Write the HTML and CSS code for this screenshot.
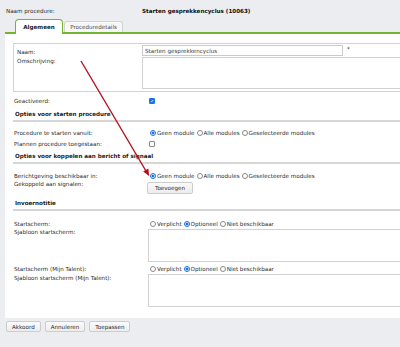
FILE: index.html
```html
<!DOCTYPE html>
<html lang="nl">
<head>
    <meta charset="UTF-8">
    <meta name="viewport" content="width=device-width, initial-scale=1.0">
    <title>Procedure - Starten gesprekkencyclus</title>
    <link rel="stylesheet" href="styles.css">
</head>
<body>
    <div class="page">
        <div class="proc-head">
            <span>Naam procedure:</span>
            <span class="proc-name">Starten gesprekkencyclus (10063)</span>
        </div>

        <div class="tabs">
            <div class="tab active">Algemeen</div>
            <div class="tab">Proceduredetails</div>
        </div>

        <div class="panel">
            <!-- naam + omschrijving -->
            <div class="group">
                <div class="g-row">
                    <label class="g-label">Naam:</label>
                    <div class="ctrl">
                        <input class="text-input" type="text" value="Starten gesprekkencyclus">
                        <span class="req">*</span>
                    </div>
                </div>
                <div class="g-row second">
                    <label class="g-label top">Omschrijving:</label>
                    <textarea class="area short"></textarea>
                </div>
            </div>

            <div class="row gap-5">
                <span>Geactiveerd:</span>
                <span class="check on"><svg viewBox="0 0 6 6"><path d="M1.3 3.1 L2.5 4.3 L4.7 1.7" /></svg></span>
            </div>

            <div class="section gap-5">Opties voor starten procedure</div>
            <div class="row gap-7">
                <span>Procedure te starten vanuit:</span>
                <div class="opts">
                    <span class="radio on"></span><span>Geen module</span>
                    <span class="radio"></span><span>Alle modules</span>
                    <span class="radio"></span><span>Geselecteerde modules</span>
                </div>
            </div>
            <div class="row gap-3">
                <span>Plannen procedure toegestaan:</span>
                <span class="check"></span>
            </div>

            <div class="section gap-4">Opties voor koppelen aan bericht of signaal</div>
            <div class="row gap-8">
                <span>Berichtgeving beschikbaar in:</span>
                <div class="opts">
                    <span class="radio on"></span><span>Geen module</span>
                    <span class="radio"></span><span>Alle modules</span>
                    <span class="radio"></span><span>Geselecteerde modules</span>
                </div>
            </div>
            <div class="row">
                <span>Gekoppeld aan signalen:</span>
                <div><button class="btn add">Toevoegen</button></div>
            </div>

            <div class="section gap-5">Invoernotitie</div>
            <div class="row gap-9">
                <span>Startscherm:</span>
                <div class="opts">
                    <span class="radio"></span><span>Verplicht</span>
                    <span class="radio on"></span><span>Optioneel</span>
                    <span class="radio"></span><span>Niet beschikbaar</span>
                </div>
            </div>
            <div class="row">
                <span>Sjabloon startscherm:</span>
                <textarea class="area tall"></textarea>
            </div>
            <div class="row gap-3">
                <span>Startscherm (Mijn Talent):</span>
                <div class="opts">
                    <span class="radio"></span><span>Verplicht</span>
                    <span class="radio on"></span><span>Optioneel</span>
                    <span class="radio"></span><span>Niet beschikbaar</span>
                </div>
            </div>
            <div class="row">
                <span class="lbl-low">Sjabloon startscherm (Mijn Talent):</span>
                <textarea class="area tall"></textarea>
            </div>
        </div>

        <div class="actions">
            <button class="btn">Akkoord</button>
            <button class="btn">Annuleren</button>
            <button class="btn">Toepassen</button>
        </div>
    </div>

    <!-- rode pijl over het formulier -->
    <svg class="arrow" width="400" height="347" viewBox="0 0 400 347">
        <line x1="81" y1="61" x2="146" y2="171" />
        <polygon points="149.3,176.3 143.2,171.5 148.3,168.5" />
    </svg>
</body>
</html>
```

FILE: styles.css
```css
* {
    margin: 0;
    padding: 0;
    box-sizing: border-box;
}
html {
    overflow: hidden;
}
body {
    position: relative;
    font-family: "DejaVu Sans", Verdana, sans-serif;
    font-size: 5.6px;
    line-height: 8px;
    color: #2a2a2a;
    background: #ecedf1;
}
.page {
    width: 620px;
    padding-left: 5px;
}
.proc-head {
    display: grid;
    grid-template-columns: 136px auto;
    height: 17px;
    padding: 7px 0 0 1px;
}
.proc-name {
    font-weight: bold;
    color: #111;
}
.tabs {
    position: relative;
    z-index: 1;
    display: flex;
    align-items: flex-end;
    margin-top: 2px;
    padding-left: 10px;
}
.tab {
    height: 11px;
    width: 59px;
    margin-left: 1px;
    padding-top: 1px;
    text-align: center;
    color: #4a4a4a;
    background: #f7f7f7;
    border: 1px solid #d3d3d3;
    border-bottom: none;
    border-radius: 3px 3px 0 0;
}
.tab.active {
    width: 48px;
    height: 15px;
    margin: 0 0 -2px 0;
    padding-top: 3px;
    font-weight: bold;
    color: #1a1a1a;
    background: #fff;
    border: 1px solid #74b530;
    border-bottom: none;
    border-radius: 4px 4px 0 0;
}
.panel {
    background: #fff;
    border-top: 2px solid #74b530;
    padding: 9px 0 11px 8px;
}
.group {
    border: 1px solid #c6d6e2;
    border-right: none;
    padding: 1px 0 2px 3px;
}
.g-row {
    display: grid;
    grid-template-columns: 125px 1fr;
}
.g-row.second {
    margin-top: 1px;
}
.g-label {
    padding-top: 3px;
}
.g-label.top {
    padding-top: 0;
}
.ctrl {
    display: flex;
    align-items: flex-start;
}
.text-input {
    width: 201px;
    height: 11px;
    padding: 0 2px;
    font: inherit;
    color: #3a3a3a;
    border: 1px solid #cacaca;
    outline: none;
}
.req {
    margin-left: 4px;
    line-height: 9px;
}
.area {
    display: block;
    width: 500px;
    font: inherit;
    border: 1px solid #d2d2d2;
    resize: none;
    outline: none;
}
.area.short {
    height: 32px;
}
.area.tall {
    height: 33px;
    margin: 1px 0 0 1px;
}
.row {
    display: grid;
    grid-template-columns: 133px 1fr;
    padding-left: 1px;
    align-items: start;
}
.lbl-low {
    padding-top: 1px;
}
.gap-3 { margin-top: 3px; }
.gap-4 { margin-top: 4px; }
.gap-5 { margin-top: 5px; }
.gap-7 { margin-top: 7px; }
.gap-8 { margin-top: 8px; }
.gap-9 { margin-top: 9px; }
.section {
    padding: 0 0 2px 2px;
    font-weight: bold;
    color: #1a1a1a;
    border-bottom: 2px solid #d6d6d6;
}
.check {
    display: block;
    width: 6px;
    height: 6px;
    margin: 1px 0 0 2px;
    border: 1px solid #8a8a8a;
    border-radius: 1px;
    background: #fff;
}
.check.on {
    border-color: #1a73e8;
    background: #1a73e8;
}
.check svg {
    display: block;
    width: 4px;
    height: 4px;
}
.check svg path {
    fill: none;
    stroke: #fff;
    stroke-width: 1.2;
}
.opts {
    display: flex;
    align-items: center;
    padding-left: 3px;
}
.radio {
    width: 6px;
    height: 6px;
    margin: 0 1px 0 2px;
    border: 1px solid #8a8a8a;
    border-radius: 50%;
    background: #fff;
}
.radio:first-child {
    margin-left: 0;
}
.radio.on {
    border-color: #1a73e8;
    background: radial-gradient(circle, #1a73e8 45%, #fff 60%);
}
.btn {
    height: 12px;
    font: inherit;
    color: #2a2a2a;
    background: linear-gradient(#fbfbfb, #ececec);
    border: 1px solid #cdcdcd;
    border-radius: 2px;
}
.btn.add {
    width: 46px;
    margin-top: 2px;
}
.actions {
    display: flex;
    gap: 4px;
    margin-top: 3px;
    padding-left: 1px;
}
.actions .btn {
    height: 11px;
    padding: 0 5px;
}
.arrow {
    position: absolute;
    top: 0;
    left: 0;
    pointer-events: none;
}
.arrow line {
    stroke: #b3121d;
    stroke-width: 1.4;
}
.arrow polygon {
    fill: #b3121d;
}
```
